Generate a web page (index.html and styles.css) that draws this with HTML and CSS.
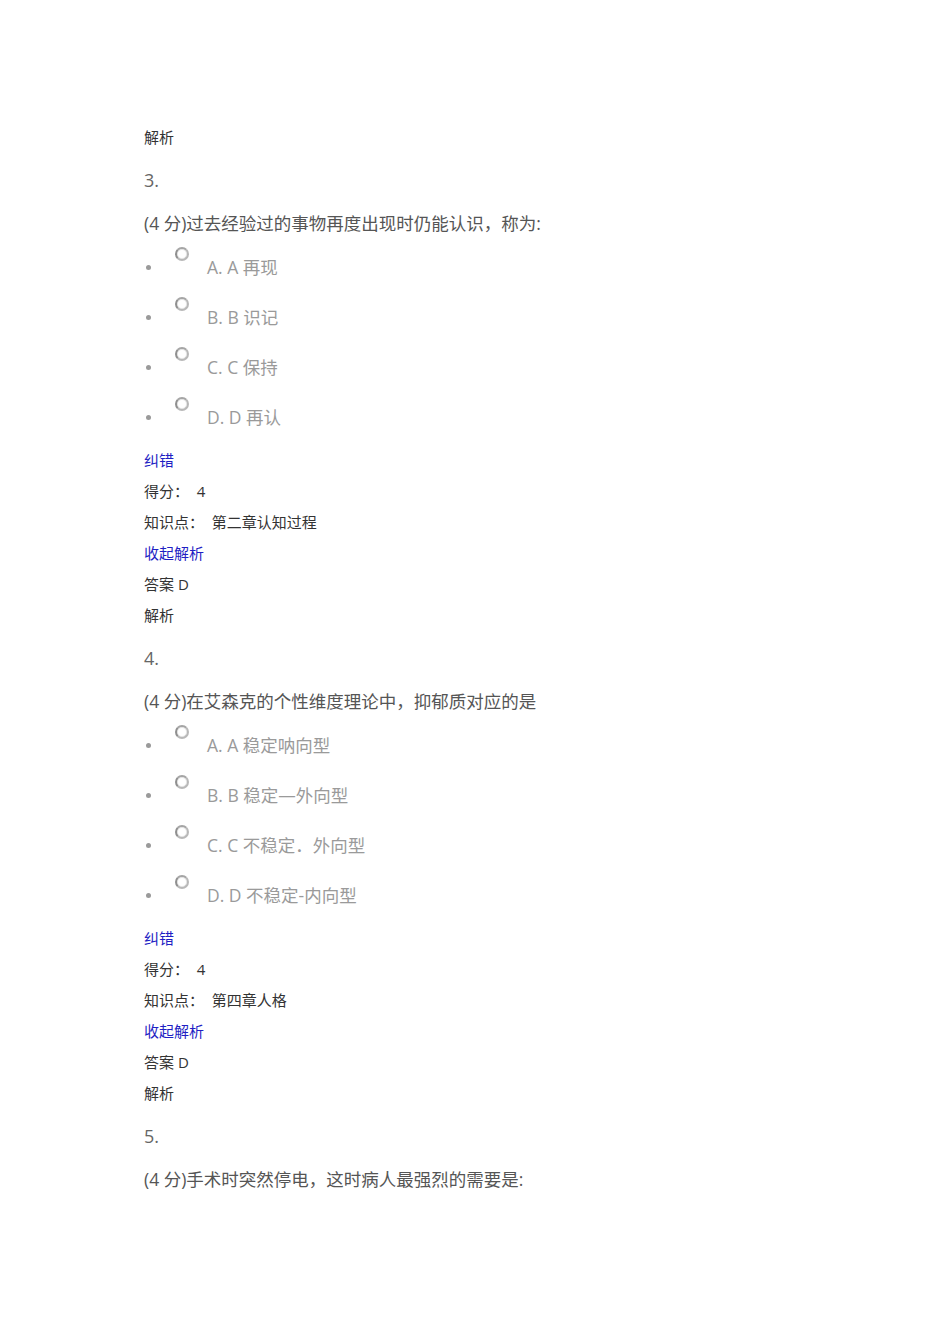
FILE: index.html
```html
<!DOCTYPE html>
<html lang="zh">
<head>
<meta charset="utf-8">
<link rel="stylesheet" href="styles.css">
</head>
<body>
<div class="page">
  <div class="line">解析</div>

  <div class="num">3.</div>
  <div class="question">(4 分)过去经验过的事物再度出现时仍能认识，称为:</div>
  <ul class="options">
    <li><span class="dot"></span><span class="radio"></span><span class="label">A. A 再现</span></li>
    <li><span class="dot"></span><span class="radio"></span><span class="label">B. B 识记</span></li>
    <li><span class="dot"></span><span class="radio"></span><span class="label">C. C 保持</span></li>
    <li><span class="dot"></span><span class="radio"></span><span class="label">D. D 再认</span></li>
  </ul>
  <div class="line link">纠错</div>
  <div class="line">得分：&nbsp;&nbsp;4</div>
  <div class="line">知识点：&nbsp;&nbsp;第二章认知过程</div>
  <div class="line link">收起解析</div>
  <div class="line">答案 D</div>
  <div class="line">解析</div>

  <div class="num">4.</div>
  <div class="question">(4 分)在艾森克的个性维度理论中，抑郁质对应的是</div>
  <ul class="options">
    <li><span class="dot"></span><span class="radio"></span><span class="label">A. A 稳定呐向型</span></li>
    <li><span class="dot"></span><span class="radio"></span><span class="label">B. B 稳定—外向型</span></li>
    <li><span class="dot"></span><span class="radio"></span><span class="label">C. C 不稳定．外向型</span></li>
    <li><span class="dot"></span><span class="radio"></span><span class="label">D. D 不稳定-内向型</span></li>
  </ul>
  <div class="line link">纠错</div>
  <div class="line">得分：&nbsp;&nbsp;4</div>
  <div class="line">知识点：&nbsp;&nbsp;第四章人格</div>
  <div class="line link">收起解析</div>
  <div class="line">答案 D</div>
  <div class="line">解析</div>

  <div class="num">5.</div>
  <div class="question">(4 分)手术时突然停电，这时病人最强烈的需要是:</div>
</div>
</body>
</html>
```

FILE: styles.css
```css
html, body {
  margin: 0;
  padding: 0;
  background: #ffffff;
}

.page {
  padding: 122px 0 0 144px;
  font-family: "Open Sans", "Noto Sans CJK SC", sans-serif;
  color: #333333;
}

.line {
  font-size: 15px;
  line-height: 31px;
  height: 31px;
  white-space: nowrap;
}

.link {
  color: #1f1fc4;
}

.num {
  font-size: 18px;
  line-height: 31px;
  height: 31px;
  margin-top: 12px;
  color: #666666;
}

.question {
  font-size: 17.5px;
  line-height: 31px;
  height: 31px;
  margin-top: 12px;
  margin-bottom: 3px;
  color: #555555;
  white-space: nowrap;
}

.options {
  list-style: none;
  margin: 0 0 3px 0;
  padding: 0;
}

.options li {
  display: flex;
  align-items: center;
  height: 50px;
}

.dot {
  width: 5px;
  height: 5px;
  border-radius: 50%;
  background: #9a9a9a;
  margin-left: 2px;
  flex: none;
}

.radio {
  align-self: flex-start;
  margin-top: 5px;
  margin-left: 24px;
  width: 10px;
  height: 10px;
  border-radius: 50%;
  border: 2px solid #b8b8b8;
  border-left-color: #8f8f8f;
  border-top-color: #a5a5a5;
  background: #ffffff;
  box-shadow: inset 0 0 0 1px #e6e6e6;
  flex: none;
}

.label {
  margin-left: 18px;
  font-size: 17.5px;
  line-height: 50px;
  color: #9a9a9a;
  white-space: nowrap;
}
```
